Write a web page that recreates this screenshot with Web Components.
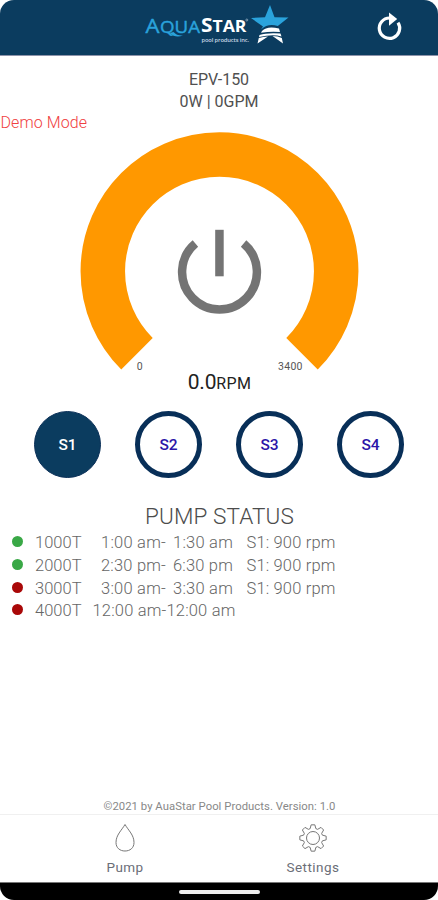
<!DOCTYPE html>
<html lang="en"><head><meta charset="utf-8"><title>AquaStar Pump</title>
<style>html,body{margin:0;background:#fff}body{width:438px;height:900px;overflow:hidden;font-family:Roboto,"Liberation Sans",sans-serif}</style></head>
<body><pump-app></pump-app>
<script>
const define=(name,html,after)=>{
  const t=document.createElement('template');t.innerHTML=html;
  customElements.define(name,class extends HTMLElement{
    connectedCallback(){
      if(this.shadowRoot)return;
      this.attachShadow({mode:'open'}).append(t.content.cloneNode(true));
      if(after)after(this,this.shadowRoot);
    }
  });
};
// Single text line whose letter spacing is tuned to a given width.
define('fit-text','<style>:host{display:block;white-space:pre;width:max-content}span{display:inline-block}</style><span><slot></slot></span>',(el,r)=>{
  const s=r.querySelector('span'),w=+el.getAttribute('width'),n=el.textContent.length;
  if(w){const d=(w-s.getBoundingClientRect().width)/n;s.style.letterSpacing=d+'px';}
});
define('brand-logo',`<style>:host{display:block;width:150px;height:44px}svg{display:block}text{font-family:"Open Sans",sans-serif}</style>
<svg width="150" height="44" viewBox="144 3 150 44">
<g fill="#2aa3dc" stroke="#2aa3dc" stroke-width=".4"><text x="145.5" y="32.500" font-size="20" textLength="14" lengthAdjust="spacingAndGlyphs">A</text><text x="160" y="32.500" font-size="16.500" textLength="40" lengthAdjust="spacingAndGlyphs">QUA</text></g>
<path d="M170 33Q175 38.5 183 35.5Q177 36 173.500 32Z" fill="#2aa3dc"/>
<g fill="#fff" font-weight="700"><text x="201" y="32" font-size="20" textLength="11.500" lengthAdjust="spacingAndGlyphs">S</text><text x="212.500" y="32" font-size="16.500" textLength="34" lengthAdjust="spacingAndGlyphs">TAR</text>
<text x="201.500" y="42" font-size="5.800" font-weight="600" textLength="47.500" fill="#c8d8e6">pool products inc.</text></g>
<circle cx="246.800" cy="20" r="1" fill="none" stroke="#b9cad9" stroke-width=".6"/>
<path d="M270 5L274.500 17.300L288.500 17.500L277.800 26Q268 23 261 29.500L263 26.500L251 18L265 17.300Z" fill="#2aa3dc"/>
<path d="M262 31Q267 25.500 279 28.500L280 32Q271 31 261 32.800Z" fill="#fff"/>
<path d="M259.500 35Q267 32.500 280.500 33.500L281.500 36.500Q273 34 259 37Z" fill="#fff"/>
<path d="M258.800 38Q263 36.500 268 36.500L257.500 43.500ZM272.500 36Q278 36 281.800 38L283 43.500Z" fill="#fff"/>
</svg>`);
define('app-header',`<style>:host{display:grid;grid-template-columns:1fr 150px 1fr;height:55px;background:#0b3c5f;border-bottom:1px solid #8d93aa;border-radius:14px 14px 0 0;box-sizing:content-box}brand-logo{margin-top:3px}svg{justify-self:end;margin:10px 33px 0 0}</style>
<span></span><brand-logo></brand-logo><svg width="32" height="32" viewBox="373 10 32 32"><path d="M389.500 18A10.200 10.200 0 1 0 398 22.600" fill="none" stroke="#fff" stroke-width="3.200"/><path d="M389 12.500L397.200 19L389 25.800Z" fill="#fff"/></svg>`);
define('rpm-gauge',`<style>:host{display:block;height:238px}svg{display:block}</style>
<svg width="438" height="246" viewBox="0 131.700 438 246"><path d="M136.980 353.520A116.700 116.700 0 1 1 302.020 353.520" fill="none" stroke="#ff9800" stroke-width="44.500"/>
<path d="M195.400 243.200A37.400 37.400 0 1 0 243.600 243.200" fill="none" stroke="#747474" stroke-width="8.500"/><rect x="215.200" y="229.500" width="8.500" height="46.500" fill="#747474"/>
<g font-family="Roboto,sans-serif" font-size="10.500" fill="#555"><text x="136.800" y="369.800">0</text><text x="278" y="369.800" textLength="24.500">3400</text></g></svg>`);
define('speed-button',`<style>:host{display:grid;place-items:center;width:67px;height:67px;box-sizing:border-box;border:5.500px solid #082f58;border-radius:50%;color:#2c16a8;font-size:15.500px;font-weight:500}:host([active]){background:#0b3c5f;color:#fff;border:1.500px solid #0c3159}</style><fit-text width="18.500"><slot></slot></fit-text>`);
define('status-row',`<style>:host{display:grid;grid-template-columns:23px 1fr;height:22.650px;align-items:center;padding-left:12px;color:#666;font-size:16.500px;font-weight:300;line-height:22px}i{width:11px;height:11px;border-radius:50%;background:var(--dot);margin-bottom:3px}div{display:flex}::slotted(*){flex:none}</style><i></i><div><slot></slot></div>`);
define('nav-item',`<style>:host{display:flex;flex-direction:column;align-items:center;width:188px;padding-top:8px;box-sizing:border-box;font-size:13.500px;line-height:16px;color:#6b6e78}::slotted(svg){display:block;margin-bottom:6px}</style><slot></slot>`);
define('pump-app',`<style>
:host{display:flex;flex-direction:column;width:438px;height:900px;background:#fff;color:#444}
.model{display:flex;flex-direction:column;align-items:center;font-size:16px;line-height:21.500px;padding-top:13px;color:#505050;height:45px;gap:0}
.demo{color:#f04040;font-size:16px;line-height:18px;font-weight:300;padding-left:.5px}
.reading{display:flex;justify-content:center;align-items:baseline;height:24px;line-height:24px;font-size:21px;color:#222;padding-left:1px}.reading .u{font-size:16px}
.speeds{display:flex;gap:34px;padding:17px 0 0 34px}
h2{margin:26px 0 0;display:flex;justify-content:center;font-size:22.500px;line-height:25px;font-weight:300;color:#4c4c4c;padding-left:1px}
.rows{padding-top:3px}
footer{margin-top:auto;display:flex;justify-content:center;font-size:11.300px;line-height:14px;color:#888;padding-left:1px}
nav{display:flex;justify-content:center;height:67px;border-top:1px solid #f0f0f0;margin-top:0}
.home{height:17px;background:#000;border-top:1px solid #777;border-radius:0 0 14px 14px;display:flex;justify-content:center}
.home i{width:81px;height:4px;border-radius:2px;background:#eee;margin-top:7px}
</style>
<app-header></app-header>
<div class="model"><fit-text width="60">EPV-150</fit-text><fit-text width="79">0W | 0GPM</fit-text></div>
<div class="demo"><fit-text width="86.500">Demo Mode</fit-text></div>
<rpm-gauge></rpm-gauge>
<div class="reading"><fit-text width="28.500">0.0</fit-text><fit-text class="u" width="35">RPM</fit-text></div>
<div class="speeds"><speed-button active>S1</speed-button><speed-button>S2</speed-button><speed-button>S3</speed-button><speed-button>S4</speed-button></div>
<h2><fit-text width="149">PUMP STATUS</fit-text></h2>
<div class="rows">
<status-row style="--dot:#39a846"><fit-text width="46.500">1000T</fit-text><fit-text style="margin-left:19.500px" width="65">1:00 am-</fit-text><fit-text style="margin-left:7px" width="60">1:30 am</fit-text><fit-text style="margin-left:13.500px" width="89">S1: 900 rpm</fit-text></status-row>
<status-row style="--dot:#39a846"><fit-text width="46.500">2000T</fit-text><fit-text style="margin-left:19.500px" width="65">2:30 pm-</fit-text><fit-text style="margin-left:7px" width="60">6:30 pm</fit-text><fit-text style="margin-left:13.500px" width="89">S1: 900 rpm</fit-text></status-row>
<status-row style="--dot:#a90808"><fit-text width="46.500">3000T</fit-text><fit-text style="margin-left:19.500px" width="65">3:00 am-</fit-text><fit-text style="margin-left:7px" width="60">3:30 am</fit-text><fit-text style="margin-left:13.500px" width="89">S1: 900 rpm</fit-text></status-row>
<status-row style="--dot:#a90808"><fit-text width="46.500">4000T</fit-text><fit-text style="margin-left:11px" width="143">12:00 am-12:00 am</fit-text></status-row>
</div>
<footer><fit-text width="232">©2021 by AuaStar Pool Products. Version: 1.0</fit-text></footer>
<nav>
<nav-item><svg width="30" height="30" viewBox="0 0 30 30" fill="none" stroke="#777" stroke-width="1"><path d="M15 1.500C11.500 7.500 6 12 6 19.500C6 25 10 28 15 28S24 25 24 19.500C24 12 18.500 7.500 15 1.500Z"/></svg><fit-text width="37">Pump</fit-text></nav-item>
<nav-item><svg class="gear" width="30" height="30" viewBox="0 0 30 30" fill="none" stroke="#777" stroke-width="1"><circle cx="15" cy="15" r="6.500"/><path/></svg><fit-text width="53">Settings</fit-text></nav-item>
</nav>
<div class="home"><i></i></div>`,(el,r)=>{
  // Eight-toothed gear outline.
  let d='';
  for(let k=0;k<8;k++)for(const [a,q] of [[-17,9.800],[-8,13.300],[8,13.300],[17,9.800]]){
    const t=(k*45+a)*Math.PI/180;d+=(d?'L':'M')+(15+q*Math.sin(t)).toFixed(2)+' '+(15-q*Math.cos(t)).toFixed(2);
  }
  const p=r.querySelector('.gear path');p.setAttribute('d',d+'Z');p.setAttribute('stroke-linejoin','round');
});
</script></body></html>
